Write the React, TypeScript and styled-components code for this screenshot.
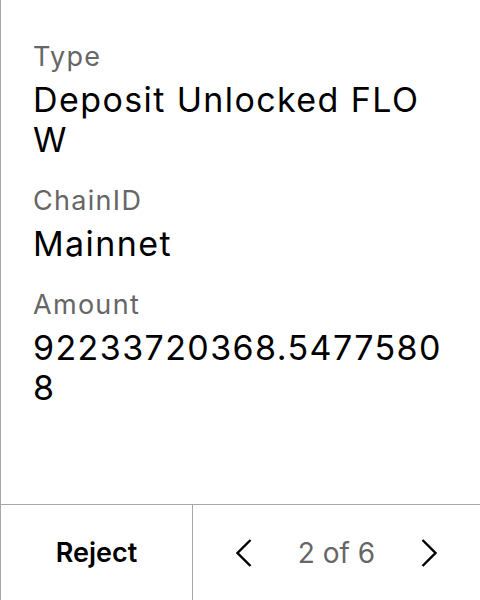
import React from "react";
import styled, { createGlobalStyle } from "styled-components";

const GlobalStyle = createGlobalStyle`
  html, body {
    margin: 0;
    background: #fff;
  }
  body {
    font-family: Inter, "Noto Sans", sans-serif;
    color: #000;
  }
  * {
    box-sizing: border-box;
  }
`;

const Screen = styled.div`
  display: flex;
  flex-direction: column;
  height: 600px;
  border-left: 1px solid #a8a8a8;
`;

const Details = styled.div`
  flex: 1;
  display: flex;
  flex-direction: column;
  gap: 25px;
  padding: 41px 35px 0 32px;
`;

const Field = styled.div`
  display: flex;
  flex-direction: column;
  gap: 7px;
`;

const Label = styled.div`
  font-size: 27px;
  line-height: 32px;
  letter-spacing: 1.3px;
  color: #666;
`;

const Value = styled.div`
  font-size: 34px;
  line-height: 40px;
  letter-spacing: 1.4px;
  color: #000;
  word-break: break-all;
`;

const Footer = styled.div`
  display: grid;
  grid-template-columns: 192px 1fr;
  height: 96px;
  border-top: 1px solid #a8a8a8;
`;

const RejectButton = styled.button`
  border: none;
  border-right: 1px solid #a8a8a8;
  background: none;
  font-family: inherit;
  font-size: 27px;
  font-weight: 600;
  color: #000;
  padding: 0;
  cursor: pointer;
`;

const Pager = styled.div`
  display: flex;
  align-items: center;
  justify-content: center;
  gap: 46px;
`;

const PageCount = styled.span`
  font-size: 28px;
  color: #666;
`;

const ArrowButton = styled.button`
  display: flex;
  border: none;
  background: none;
  padding: 0;
  cursor: pointer;
`;

const Chevron = ({ dir }: { dir: "left" | "right" }) => (
  <svg width="16" height="30" viewBox="0 0 16 30" fill="none">
    <polyline
      points={dir === "left" ? "14.5,2 1.5,15 14.5,28" : "1.5,2 14.5,15 1.5,28"}
      stroke="#000"
      strokeWidth="2.4"
    />
  </svg>
);

const fields = [
  { label: "Type", value: "Deposit Unlocked FLOW" },
  { label: "ChainID", value: "Mainnet" },
  { label: "Amount", value: "92233720368.54775808" },
];

export default function App() {
  return (
    <>
      <GlobalStyle />
      <Screen>
        <Details>
          {fields.map((f) => (
            <Field key={f.label}>
              <Label>{f.label}</Label>
              <Value>{f.value}</Value>
            </Field>
          ))}
        </Details>
        <Footer>
          <RejectButton>Reject</RejectButton>
          <Pager>
            <ArrowButton aria-label="Previous">
              <Chevron dir="left" />
            </ArrowButton>
            <PageCount>2 of 6</PageCount>
            <ArrowButton aria-label="Next">
              <Chevron dir="right" />
            </ArrowButton>
          </Pager>
        </Footer>
      </Screen>
    </>
  );
}
